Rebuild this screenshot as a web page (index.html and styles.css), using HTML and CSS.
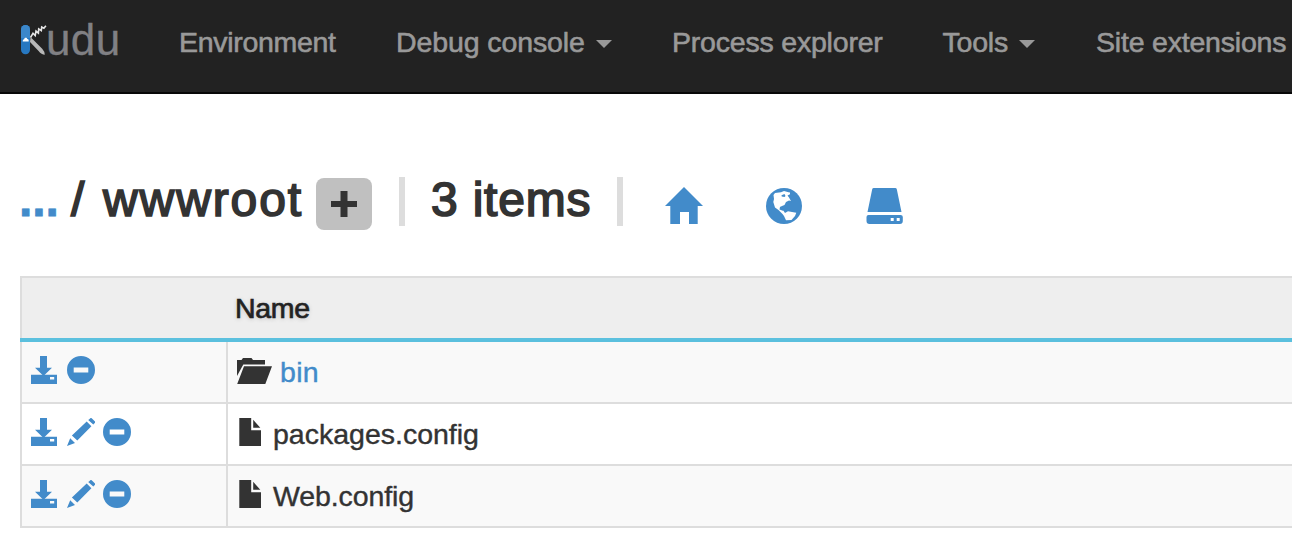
FILE: index.html
```html
<!DOCTYPE html>
<html lang="en">
<head>
<meta charset="utf-8">
<title>Kudu</title>
<link rel="stylesheet" href="styles.css">
</head>
<body>
<svg class="defs" width="0" height="0" aria-hidden="true">
  <symbol id="download" viewBox="0 0 28 28"><path d="M10 0h7v11.700h5L14.500 19h-2L5 11.700h5z"/><path fill-rule="evenodd" d="M1 18.700h26V28H1zM20 21v2.400h4.200V21z"/></symbol>
  <symbol id="minus" viewBox="0 0 28 28"><path fill-rule="evenodd" d="M14 0a14 14 0 1 1 0 28 14 14 0 0 1 0-28zM6.700 11.500v5h14.600v-5z"/></symbol>
  <symbol id="pencil" viewBox="0 0 28 28"><path d="M22 1.500 23.300.200Q24-.300 24.700.300L28 3.600Q28.400 4.400 27.800 5L26.300 6.600 21.200 1.900zM19.700 3.500 24.400 8.200 10.300 22.500 4.900 17.500zM3.200 20.200 8 25 0 28z"/></symbol>
  <symbol id="file" viewBox="0 0 22 28"><path d="M.300 0h11.900v12.200H22V28H.300zM14.200 1.800 21.300 9.800h-7.100z"/></symbol>
  <symbol id="folder" viewBox="0 0 36 28"><path d="M1 4h4.500l1.500-2h8.500l1.500 2H29v4.400H7.300L1 20zM8 10.300H36L29.300 28H1.200z"/></symbol>
</svg>
<nav class="navbar">
  <a class="brand">
    <svg class="knife" width="30" height="34" viewBox="0 0 30 34">
      <path d="M9.500 14 21.200 25.800Q24 29 23.800 31.800 20.500 31.800 17.600 28L9 19z" fill="#b7b7b7"/>
      <path d="M9.500 14.500 12 10.300l2.200 2.300.800-4.500 2.400 2 .300-4.200 2.600 1.800.400-3.700 2.200 1.200 2-2.500" fill="none" stroke="#e6e6e6" stroke-width="1.600"/>
      <rect x="0" y="2" width="9" height="29.300" rx="4.500" fill="#2778c1"/>
      <path d="M0 15V6.500a4.500 4.500 0 0 1 9 0V15z" fill="#3b87ca"/>
      <path d="M1.700 18.500c0-2 1-2.200 1.500-2.300.3-2 2.800-1.900 3.100-.2 1.400.2 1.500 1.300 1.400 2.500z" fill="#fff"/>
    </svg><span>udu</span>
  </a>
  <div class="links">
    <a class="l1">Environment</a>
    <a class="l2">Debug console<i class="caret"></i></a>
    <a class="l3">Process explorer</a>
    <a class="l4">Tools<i class="caret"></i></a>
    <a class="l5">Site extensions</a>
  </div>
</nav>
<main>
  <div class="heading">
    <span class="dots">...</span><span class="slash">/</span><span class="root">wwwroot</span>
    <button class="add" aria-label="Add"><svg width="26" height="26" viewBox="0 0 26 26"><path d="M9.500 0h7v10H26v6h-9.500v10h-7V16H0v-6h9.500z"/></svg></button>
    <span class="divider"></span><span class="count">3 items</span><span class="divider second"></span>
    <div class="shortcuts">
      <svg width="38" height="38" viewBox="0 0 38 38"><path d="M19 0 38 19h-5.300v18H24V25h-9v12H5.300V19H0z"/></svg>
      <svg width="36" height="36" viewBox="0 0 36 36"><circle cx="18" cy="18" r="18"/><path fill="#fff" d="M7.500 7 9 5 15 4.300 18 3 22.500 4.200 24 4.500 24 6.300 21.500 7.500 23 9.500 25 13 23 12.500 20 14 18.500 17 16 18 14 19 13.500 21.500 15.500 22.300 17.500 22.800 19 25 22 23.200 26 24 30.300 24.700 29 28 25.500 32 20 32.200 18 28 16.500 26 12.500 22 9 19.500 7.300 14 8 11z"/><path d="m15.500 7.200 3-1.200 1 2-1 1-2.800-.500zM14.500 18.500 17.700 21.500 16.500 22.500z"/></svg>
      <svg class="drive" width="37" height="36" viewBox="0 0 37 36"><path fill-rule="evenodd" d="M7.800 0h21.400q1.300 0 1.600 1.300L35.500 24H1.500L6.200 1.300Q6.500 0 7.800 0zM2.500 27h32q2.300 0 2.300 2v4q0 3-3 3H3.500q-3 0-3-3v-4q0-2 2-2zM24.700 30v3h3v-3zM30.700 30v3h3v-3z"/></svg>
    </div>
  </div>
  <table class="files">
    <thead><tr><th class="tools"></th><th class="name">Name</th></tr></thead>
    <tbody>
      <tr>
        <td><div class="actions"><svg><use href="#download"/></svg><svg><use href="#minus"/></svg></div></td>
        <td><div class="entry folder"><svg><use href="#folder"/></svg><a>bin</a></div></td>
      </tr>
      <tr>
        <td><div class="actions"><svg><use href="#download"/></svg><svg><use href="#pencil"/></svg><svg><use href="#minus"/></svg></div></td>
        <td><div class="entry"><svg><use href="#file"/></svg><span class="packages">packages.config</span></div></td>
      </tr>
      <tr>
        <td><div class="actions"><svg><use href="#download"/></svg><svg><use href="#pencil"/></svg><svg><use href="#minus"/></svg></div></td>
        <td><div class="entry"><svg><use href="#file"/></svg><span class="web">Web.config</span></div></td>
      </tr>
    </tbody>
  </table>
</main>
</body>
</html>
```
FILE: styles.css
```css
* { box-sizing: border-box; }
body { margin: 0; overflow: hidden; background: #fff; color: #333; font: 28.5px/40px "Liberation Sans", Arial, sans-serif; }
svg { display: block; flex: none; fill: currentColor; }
.defs { display: none; }
.navbar { display: flex; height: 94px; background: #222; border-bottom: 2px solid #080808; padding-left: 21px; color: #999; -webkit-text-stroke: 0.6px; }
.brand { display: flex; width: 158px; padding-top: 23px; flex: none; color: #808084; font-size: 44px; -webkit-text-stroke: 0; }
.brand span { margin-left: -5px; line-height: 34px; letter-spacing: 0.4px; -webkit-text-stroke: 0.3px; }
.links { display: grid; grid-template-columns: 217px 276px 270.5px 153.5px auto; padding-top: 22px; white-space: nowrap; letter-spacing: -0.2px; }
.l1 { letter-spacing: -0.3px; }
.l2 { letter-spacing: -0.1px; }
.caret { display: inline-block; border: 8px solid transparent; border-top-color: #999; border-bottom: 0; margin-left: 11px; vertical-align: 4px; }
main { padding: 80px 0 0 20px; }
.heading { display: flex; height: 102px; font-size: 48px; line-height: 52px; white-space: nowrap; -webkit-text-stroke: 1.7px; }
.heading svg { stroke: none; }
.dots { width: 51px; margin-left: -1px; color: #428bca; font-weight: bold; letter-spacing: -0.1px; -webkit-text-stroke: 0.8px; }
.slash { width: 33px; padding-left: 1px; }
.root { width: 213px; flex: none; letter-spacing: 1.9px; }
.add { display: flex; align-items: center; justify-content: center; width: 56px; height: 52px; margin-top: 4px; border: 0; padding: 0; border-radius: 8px; background: #c0c0c0; color: #333; flex: none; }
.divider { width: 6px; height: 49px; margin: 3px 26px 0 27px; background: #ddd; flex: none; }
.count { width: 162px; flex: none; letter-spacing: 0.8px; }
.divider.second { margin: 3px 0 0 24px; }
.shortcuts { display: flex; gap: 63px; margin: 12px 0 0 42px; color: #428bca; }
.shortcuts svg { margin-top: 2px; }
.shortcuts svg:first-child { margin-top: 1px; }
.shortcuts .drive { margin-left: 1px; }
.files { width: 1300px; table-layout: fixed; border-collapse: separate; border-spacing: 0; border-left: 2px solid #ddd; border-top: 2px solid #ddd; letter-spacing: -0.1px; -webkit-text-stroke: 0.4px; }
th, td { padding: 0; text-align: left; vertical-align: top; }
th { height: 64px; background: #eee; border-bottom: 4px solid #5bc0de; }
.tools { position: relative; width: 206px; }
/* carries the header rule across the table's left border */
.tools::after { content: ""; position: absolute; left: -2px; bottom: -4px; width: 2px; height: 4px; background: #5bc0de; }
.name { color: #222; font-weight: normal; padding: 10px 0 0 7px; text-shadow: 0 1px 4px #bbb; letter-spacing: -0.3px; -webkit-text-stroke: 0.7px; }
td { height: 62px; border-bottom: 2px solid #ddd; }
td:first-child { border-right: 2px solid #ddd; }
tbody tr:nth-child(odd) { background: #f9f9f9; }
.actions { display: flex; gap: 8px; padding: 14px 0 0 8px; color: #428bca; }
.actions svg { width: 28px; height: 28px; }
.actions svg:first-child { margin-right: 0.7px; }
.entry { display: flex; padding: 10px 0 0 11px; }
.entry svg { width: 22px; height: 28px; margin: 4px 12px 0 0; }
.entry.folder { padding-left: 8px; }
.folder svg { width: 36px; height: 28px; margin: 4px 8px 0 0; }
.entry a { color: #428bca; letter-spacing: 0.3px; }
.packages { letter-spacing: 0; }
```
